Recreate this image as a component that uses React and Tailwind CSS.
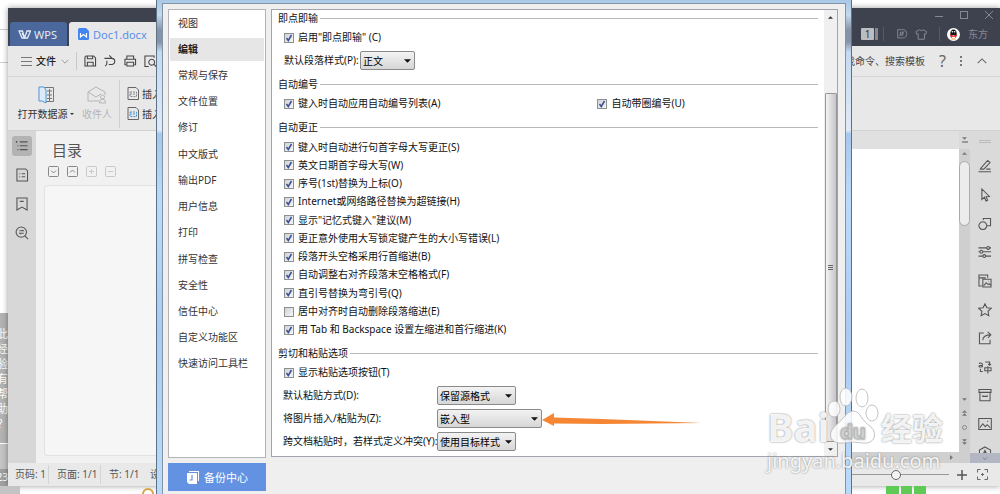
import React from 'react';
import clsx from 'clsx';

const NAV_ITEMS = [
  '视图', '编辑', '常规与保存', '文件位置', '修订', '中文版式', '输出PDF',
  '用户信息', '打印', '拼写检查', '安全性', '信任中心', '自定义功能区', '快速访问工具栏',
];

const AUTO_CORRECT = [
  { label: '键入时自动进行句首字母大写更正(S)', checked: true },
  { label: '英文日期首字母大写(W)', checked: true },
  { label: '序号(1st)替换为上标(O)', checked: true },
  { label: 'Internet或网络路径替换为超链接(H)', checked: true },
  { label: '显示"记忆式键入"建议(M)', checked: true },
  { label: '更正意外使用大写锁定键产生的大小写错误(L)', checked: true },
  { label: '段落开头空格采用行首缩进(B)', checked: true },
  { label: '自动调整右对齐段落末空格格式(F)', checked: true },
  { label: '直引号替换为弯引号(Q)', checked: true },
  { label: '居中对齐时自动删除段落缩进(E)', checked: false },
  { label: '用 Tab 和 Backspace 设置左缩进和首行缩进(K)', checked: true },
];

const ICONS = {
  save: <path d="M2 3.500Q2 2 3.500 2H11L13 4V12.500H2ZM4.500 2v3h5.500V2M4.500 12.500V8.500h6v4" />,
  redo: <path d="M1.500 4.500H9a3.200 3.200 0 0 1 0 6.400H6M6.500 1.500l3 3M4 7v2.500a3 3 0 0 1-2 3" />,
  print: <path d="M4 5V2h7v3M3 11H2V5.500h11V11h-1M4 8.500h7v4H4Z" />,
  preview: <path d="M11.500 4V2H2v11h4M9 5.500a3 3 0 1 0 .01 0M11.200 10.500l2.300 2.500" />,
  list: <path d="M1.500 3h1M5 3h8M2.500 7h1M5 7h8M2.500 11h1M5 11h8M1.500 2v2" />,
  page: <path d="M2 1h9l2 2v10.500H2ZM4.500 6h1M7 6h3.500M4.500 9h1M7 9h3.500" />,
  bookmark: <path d="M2 1h10.500V13.500L7.200 10.500 2 13.500ZM5 4.500h4" />,
  find: <path d="M6.500 1a5.300 5.300 0 1 0 .01 0M10.500 10.500l3 3M4.500 5h4l-1-1M9 7.500H5l1 1" />,
  pen: <path d="M3 9.500 10 1.500l2.500 2.200L6 10.500H2.500ZM.5 13.200h13M8.500 10.500H13" />,
  cursor: <path d="M4 1v11l2.600-2.500L8.300 13.500l1.700-.8-1.700-3.700 3.500-.2Z" />,
  shapes: <path d="M5 5a4 4 0 1 0 .01 0M5.500 3V1.500H13v7.500H9.500" />,
  sliders: <path d="M.5 3h8.500M12 3h1.500M10.500 1.500a1.500 1.500 0 1 0 .01 0M.5 7h1.500M5 7h8.500M3.500 5.500a1.500 1.500 0 1 0 .01 0M.5 11.500h4.500M8 11.500h5.500M6.500 10a1.500 1.500 0 1 0 .01 0" />,
  gallery: <path d="M4 12.500H1v-11.500H10V4M1 4H8M5 5.500h8.500v8H5ZM6 12l2.500-3 2 2 1-1 1.500 1.500M10.500 7.500h.5" />,
  star: <path d="m7.200.8 1.900 4.200 4.600.5-3.400 3.100.9 4.600-4-2.300-4 2.300.9-4.600L.7 5.500l4.600-.5Z" />,
  share: <path d="M6 2H1.500V13.200h11V9M5 9.500C5 6 8 4 13 4M10 1 13.300 4 10.300 7" />,
  translate: <path d="M1 3.500q3.500-1 3.500 1v3M4.500 5.500Q1 5.500 1 6.700t3.500 0M7.500 2H12v3M10.500 4 12 5.500 13.500 4M7 8h6.500v3.200H7ZM10.200 6.500v7.500M2.500 9v3H5" />,
  box: <path d="M1 1.500h12.500v3H1ZM2 4.500v8.700h10.500V4.500M5 7.500v1.200h4.500v-1.200" />,
  image: <path d="M.8 1.500h13v11.500h-13ZM2 11l3-4 2.500 3L9.500 8l3 3M9.500 4.500h1" />,
  badge: <path d="m7.200 1 5.800 3.200v6L7.200 13.500 1.500 10.200v-6ZM4.500 10 7.200 4.500l2.700 5.500M7.200 6.500v2.500" />,
  emblem: <path d="M2 2h6q5 0 5 5t-5 5H2ZM5.500 5h3v3.500H5ZM4 10l6-6" />,
  shirt: <path d="M5 2 1 4l1 3 1.500-.5V12.500h7V6.500L12 7l1-3-4-2Q7 4 5 2Z" />,
};

const TOOLS = ['pen', 'cursor', 'shapes', 'sliders', 'gallery', 'star', 'share', 'translate', 'box', 'image', 'badge'];

const Icon = ({ name, className = 'size-[14px]' }) => (
  <svg viewBox="0 0 14.500 14.500" fill="none" stroke="currentColor" strokeWidth="1.100" className={clsx('shrink-0', className)}>
    {ICONS[name]}
  </svg>
);

const Chevron = ({ up, className }) => (
  <svg viewBox="0 0 12 7" fill="none" stroke="currentColor" strokeWidth="1.200" className={className}>
    <path d={up ? 'M1 6l5-5 5 5' : 'M1 1l5 5 5-5'} />
  </svg>
);

const Triangle = ({ up, className }) => (
  <svg viewBox="0 0 8 4" fill="currentColor" className={className}>
    <path d={up ? 'M0 4 4 0l4 4Z' : 'M0 0h8L4 4Z'} />
  </svg>
);

const CheckBox = ({ label, checked }) => (
  <label className="flex items-center gap-[4px] whitespace-nowrap">
    <span className="grid size-[10px] shrink-0">
      <input
        type="checkbox"
        defaultChecked={checked}
        className="peer [grid-area:1/1] size-[10px] appearance-none border border-[#8e8f8f] bg-linear-to-br from-[#cfd3da] to-[#f6f6f6]"
      />
      <svg viewBox="0 0 10 10" fill="none" stroke="#3c4f94" strokeWidth="1.500" className="pointer-events-none invisible [grid-area:1/1] size-[10px] peer-checked:visible">
        <path d="M2.500 5l1.800 2.500L7.500 2" />
      </svg>
    </span>
    {label}
  </label>
);

const DropDown = ({ id, value, className }) => (
  <span className={clsx('grid h-[19px] shrink-0', className)}>
    <select
      id={id}
      defaultValue={value}
      className="[grid-area:1/1] appearance-none rounded-[2px] border border-[#8a8a8a] bg-linear-to-b from-[#f3f3f3] to-[#d6d6d6] pl-[2px] text-[10px] leading-[16px] text-black"
    >
      <option>{value}</option>
    </select>
    <Triangle className="pointer-events-none [grid-area:1/1] mr-[4px] h-[4px] w-[7px] self-center justify-self-end" />
  </span>
);

const GroupTitle = ({ children }) => (
  <h3 className="flex h-[16px] items-center gap-[2px] whitespace-nowrap">
    {children}
    <span className="h-px flex-1 bg-[#b8b8b8]" />
  </h3>
);

const PasteRow = ({ id, label, value, className, children }) => (
  <div className="flex h-[23px] items-center">
    <label htmlFor={id} className="w-[154px] shrink-0 whitespace-nowrap">{label}</label>
    <DropDown id={id} value={value} className={className} />
    {children}
  </div>
);

const TitleBar = () => (
  <header className="flex h-[38px] justify-between bg-[#3e424f] pl-[2px]">
    <div className="flex items-end gap-[2px] text-[11px]">
      <button className="flex h-[24px] w-[57px] items-center gap-[3px] rounded-t-[3px] bg-[#4a689c] pl-[8px] text-[#e4eaf5]">
        <svg viewBox="0 0 13 9" fill="none" stroke="currentColor" strokeWidth="1.300" className="h-[9px] w-[13px]">
          <path d="M.5 1h4l2 7L9 1h3.500L9.500 8h-3L4 3M1 1l3 7h2.500" />
        </svg>
        WPS
      </button>
      <button className="flex h-[24px] w-[120px] items-center gap-[4px] rounded-t-[3px] bg-[#e8e8e8] pl-[9px] text-[#5b8fe8]">
        <svg viewBox="0 0 11 12" className="h-[12px] w-[11px]">
          <path d="M0 1.500Q0 0 1.500 0H8l3 3v7.500q0 1.500-1.500 1.500h-8Q0 12 0 10.500Z" fill="#4284f0" />
          <path d="M2.500 5v4l3-2.500 3 2.500V5" fill="none" stroke="#fff" strokeWidth="1.200" />
        </svg>
        Doc1.docx
      </button>
    </div>
    <div className="flex flex-col items-end text-[#858994]">
      <div className="flex h-[14px] items-center gap-[17px] pr-[7px]">
        <svg viewBox="0 0 8 8" stroke="currentColor" className="size-[8px]"><path d="M0 5.500h8" /></svg>
        <svg viewBox="0 0 8 8" fill="none" stroke="currentColor" className="size-[8px]"><rect x=".5" y=".5" width="7" height="7" /></svg>
        <svg viewBox="0 0 8 8" stroke="currentColor" className="size-[8px]"><path d="M0 0l8 8M8 0 0 8" /></svg>
      </div>
      <div className="flex h-[24px] items-center pr-[12px] text-[10px]">
        <span className="h-[12px] w-[13px] rounded-[1px] bg-[#bdbdc1] text-center leading-[12px] text-[#333]">1</span>
        <span className="ml-[1px] h-[12px] w-[3px] bg-[#85878f]" />
        <span className="mx-[5px] h-[14px] w-px bg-[#555966]" />
        <Icon name="emblem" className="ml-[7px] size-[12px]" />
        <Icon name="shirt" className="ml-[7px] size-[13px]" />
        <span className="mr-[7px] ml-[11px] h-[14px] w-px bg-[#555966]" />
        <svg viewBox="0 0 13 13" className="mr-[8px] size-[13px]">
          <circle cx="6.500" cy="6.500" r="6.500" fill="#fff" />
          <ellipse cx="6.500" cy="6" rx="3.200" ry="4.500" fill="#151515" />
          <ellipse cx="6.500" cy="9" rx="2" ry="2" fill="#fff" />
          <path d="M3 6.500q3.500 2 7 0v1.500q-3.500 2-7 0Z" fill="#e33" />
          <path d="M4 11.500h5l-1-1H5Z" fill="#f5a623" />
          <circle cx="5.400" cy="3.800" r=".8" fill="#fff" />
          <circle cx="7.600" cy="3.800" r=".8" fill="#fff" />
        </svg>
        东方
      </div>
    </div>
  </header>
);

const MenuBar = () => (
  <div className="flex h-[31px] items-center justify-between border-b border-[#d5d5d5] text-[#444]">
    <div className="flex items-center pl-[13px]">
      <svg viewBox="0 0 11 9" stroke="#777" className="h-[9px] w-[11px]"><path d="M0 .5h11M0 4.500h11M0 8.500h11" /></svg>
      <button className="ml-[4px] flex items-center gap-[5px] font-medium text-[#222]">
        文件
        <Chevron className="h-[5px] w-[8px] text-[#888]" />
      </button>
      <span className="mr-[6px] ml-[7px] h-[18px] w-px bg-[#c8c8c8]" />
      <div className="flex gap-[6px]">
        <Icon name="save" />
        <Icon name="redo" />
        <Icon name="print" />
        <Icon name="preview" />
      </div>
    </div>
    <div className="flex items-center pr-[12px]">
      <span>查找命令、搜索模板</span>
      <span className="ml-[14px] text-[16px] text-[#666]">?</span>
      <span className="ml-[14px] flex flex-col gap-[2px]">
        <i className="size-[2px] bg-[#777]" />
        <i className="size-[2px] bg-[#777]" />
        <i className="size-[2px] bg-[#777]" />
      </span>
      <Chevron up className="ml-[14px] h-[6px] w-[12px] text-[#666]" />
    </div>
  </div>
);

const Ribbon = () => (
  <div className="flex h-[54px] items-center border-b border-[#d2d2d2] pl-[9px] text-[#333]">
    <button className="flex w-[57px] flex-col items-center gap-[2px] whitespace-nowrap">
      <svg viewBox="0 0 16 18" fill="none" className="h-[18px] w-[16px]">
        <path d="M7 1.500h8.500v14H7M9 5h5M9 9h5M9 12.500h5M11.500 3v12" stroke="#777" />
        <path d="M1 1h5l2 3v13l-4-2H1Z" fill="#dcebfa" stroke="#4e95d6" />
      </svg>
      <span className="flex items-center gap-[2px] leading-[16px]">
        打开数据源
        <Triangle className="h-[2px] w-[4px]" />
      </span>
    </button>
    <button disabled className="ml-[7px] flex w-[32px] flex-col items-center gap-[2px] whitespace-nowrap text-[#b5b5b5]">
      <svg viewBox="0 0 20 18" fill="none" stroke="currentColor" className="h-[18px] w-[20px]">
        <path d="M12 15H1V6l8-5 9 5v3M1 6l8 5 5-3M15.500 9a2 2 0 1 0 .01 0M12.500 17q0-4 3-4t3 4Z" />
      </svg>
      <span className="leading-[16px]">收件人</span>
    </button>
    <span className="ml-[6px] h-[48px] w-px bg-[#cfcfcf]" />
    <div className="ml-[7px] flex flex-col gap-[4px] whitespace-nowrap">
      {[false, true].map((blue) => (
        <button key={String(blue)} className="flex items-center gap-[3px] leading-[16px]">
          <svg viewBox="0 0 12 13" fill="none" className="h-[13px] w-[12px]">
            <path d="M1 .5h8l2.500 2.500v9.500H1Z" stroke="#666" />
            <path d="M3 5h6.500v4.500H3ZM3 7h6.500" stroke={blue ? '#4e95d6' : '#888'} strokeDasharray="2 1" />
          </svg>
          插入
        </button>
      ))}
    </div>
  </div>
);

const SideBar = () => (
  <nav className="flex w-[28px] flex-col items-center gap-[9px] bg-[#d7d7d7] pt-[5px] text-[#555]">
    {['list', 'page', 'bookmark', 'find'].map((name, i) => (
      <button key={name} className={clsx('flex size-[20px] items-center justify-center rounded-[3px]', i === 0 && 'bg-[#b3b3b3]')}>
        <Icon name={name} />
      </button>
    ))}
  </nav>
);

const TocPane = () => (
  <section className="flex w-[121px] flex-col bg-[#f1f1f1] pb-[7px] pl-[8px]">
    <h2 className="mt-[9px] pl-[8px] text-[15px] leading-[21px] text-[#555]">目录</h2>
    <div className="mt-[5px] flex gap-[8px] pl-[4px] text-[#888]">
      {['M3 4.500l2.500 2.500L8 4.500', 'M3 6.500 5.500 4 8 6.500', 'M3 5.500h5M5.500 3v5', 'M3 5.500h5'].map((d, i) => (
        <svg key={d} viewBox="0 0 11 11" fill="none" stroke="currentColor" className={clsx('size-[11px]', i > 1 && 'text-[#c9c9c9]')}>
          <rect x=".5" y=".5" width="10" height="10" rx="1" />
          <path d={d} />
        </svg>
      ))}
    </div>
    <div className="mt-[8px] flex-1 rounded-l-[4px] border border-r-0 border-[#e2e2e2] bg-[#f6f6f6]" />
  </section>
);

const VerticalBar = () => (
  <div className="flex w-[11px] flex-col items-center bg-[#cfcfcf] text-[#777]">
    <div className="flex h-[18px] w-full flex-col items-center justify-center gap-[1px] bg-[#dadada]">
      <Triangle className="h-[3px] w-[5px]" />
      <span className="h-[2px] w-[6px] bg-[#999]" />
    </div>
    <Triangle up className="mt-[3px] h-[3px] w-[5px]" />
    <div className="mt-[6px] h-[65px] w-[11px] rounded-full border border-[#aaa] bg-[#ececec]" />
    <div className="mt-auto mb-[18px] flex flex-col items-center gap-[9px]">
      <Triangle className="h-[3px] w-[5px]" />
      <span className="flex flex-col"><Triangle up className="h-[3px] w-[5px]" /><Triangle up className="h-[3px] w-[5px]" /></span>
      <span className="size-[5px] rounded-full border border-[#888]" />
      <span className="flex flex-col"><Triangle className="h-[3px] w-[5px]" /><Triangle className="h-[3px] w-[5px]" /></span>
    </div>
  </div>
);

const ToolStrip = () => (
  <aside className="flex w-[30px] flex-col bg-[#dadada] text-[#555]">
    <div className="mx-auto mt-[9px] mb-[9px] h-[3px] w-[12px] shrink-0 border-y border-[#bbb]" />
    <div className="min-h-0 flex-1 overflow-hidden">
      <div className="flex h-[315px] flex-col">
        {TOOLS.map((name) => (
          <button key={name} className="flex flex-1 items-center justify-center">
            <Icon name={name} />
          </button>
        ))}
      </div>
    </div>
    <div className="flex h-[10px] shrink-0 items-center justify-center bg-[#b3b7c4]">
      <Chevron className="h-[3px] w-[6px]" />
    </div>
  </aside>
);

const StatusBar = () => (
  <footer className="flex h-[23px] items-center justify-between bg-[#e9e9e9] text-[#555]">
    <div className="flex items-center whitespace-nowrap">
      <span className="w-[41px] border-r border-[#d4d4d4] pl-[7px] leading-[19px]">页码: 1</span>
      <span className="w-[52px] border-r border-[#d4d4d4] pl-[8px] leading-[19px]">页面: 1/1</span>
      <span className="w-[49px] pl-[8px] leading-[19px]">节: 1/1</span>
      <span>设</span>
    </div>
    <div className="flex items-center pr-[12px]">
      <input
        type="range"
        aria-label="缩放"
        defaultValue={50}
        className="h-[12px] w-[106px] appearance-none bg-[linear-gradient(#999,#999)] bg-[length:100%_1px] bg-center bg-no-repeat [&::-webkit-slider-thumb]:size-[10px] [&::-webkit-slider-thumb]:appearance-none [&::-webkit-slider-thumb]:rounded-full [&::-webkit-slider-thumb]:border [&::-webkit-slider-thumb]:border-[#666] [&::-webkit-slider-thumb]:bg-[#f2f2f2]"
      />
      <svg viewBox="0 0 10 10" stroke="#555" strokeWidth="1.500" className="ml-[8px] size-[10px]"><path d="M0 5h10M5 0v10" /></svg>
      <svg viewBox="0 0 11 11" fill="none" stroke="#666" className="ml-[10px] size-[11px]">
        <path d="M.5 3.500v-3h3M7.500.5h3v3M10.500 7.500v3h-3M3.500 10.500h-3v-3M5.500 4v3M4 5.500h3" />
      </svg>
    </div>
  </footer>
);

const OptionsDialog = () => (
  <div
    role="dialog"
    aria-label="选项"
    className="absolute inset-y-0 right-[148px] left-[156px] border-x border-[#5c7186] bg-[linear-gradient(#a9c7e6_0px,#c3d9ee_15px,#8593a8_30px,#8593a8_42px,#c4daf1_52px,#dfeaf7_130px,#a5c8ec_134px,#b9dbfb_200px,#a9cbf2_330px,#b9dbfb_494px)] px-[5px] pt-[3px]"
  >
    <div className="flex h-full gap-[5px] border-x border-t border-[#8394a6] bg-[#efefef] pt-[5px] pr-[7px] pb-[3px] pl-[5px]">
      <div className="flex w-[98px] shrink-0 flex-col gap-[5px]">
        <nav className="flex-1 border border-[#b4b4b4] bg-white px-[1px]">
          <div className="flex h-[367px] flex-col">
            {NAV_ITEMS.map((item) => (
              <button key={item} className="flex flex-1 items-center text-left text-[#333]">
                <span className={clsx('w-full py-[4px] pl-[8px] leading-[15px]', item === '编辑' && 'bg-[#e6e6e6] font-bold text-[#222]')}>{item}</span>
              </button>
            ))}
          </div>
        </nav>
        <button className="flex h-[28px] items-center justify-center gap-[5px] bg-[#6492e2] text-[11px] text-white">
          <svg viewBox="0 0 13 13" className="size-[13px]">
            <path d="M3 0h10v10h-1V1H3Z" fill="#fff" />
            <path d="M1 2h10v11H3l-2-2Z" fill="#fff" />
            <path d="M6 4v5H3.500" fill="none" stroke="#6492e2" strokeWidth="1.200" />
          </svg>
          备份中心
        </button>
      </div>
      <div className="mb-[34px] flex min-w-0 flex-1 border border-[#a3a3ad] bg-white">
        <form className="flex min-w-0 flex-1 flex-col px-[6px] text-[#111]">
          <GroupTitle>即点即输</GroupTitle>
          <div className="pl-[6px]">
            <div className="flex h-[23px] items-center"><CheckBox label={'启用"即点即输" (C)'} checked /></div>
            <div className="flex h-[23px] items-center">
              <label htmlFor="para-style" className="w-[76px] whitespace-nowrap">默认段落样式(P):</label>
              <DropDown id="para-style" value="正文" className="w-[55px]" />
            </div>
          </div>
          <div className="mt-[4px]">
            <GroupTitle>自动编号</GroupTitle>
            <div className="grid h-[23px] grid-cols-[314fr_221fr] items-center pl-[6px]">
              <CheckBox label="键入时自动应用自动编号列表(A)" checked />
              <CheckBox label="自动带圈编号(U)" checked />
            </div>
          </div>
          <div className="mt-[4px]">
            <GroupTitle>自动更正</GroupTitle>
            <div className="mt-[3px] flex h-[201px] flex-col pl-[6px]">
              {AUTO_CORRECT.map((opt) => (
                <div key={opt.label} className="flex flex-1 items-center"><CheckBox {...opt} /></div>
              ))}
            </div>
          </div>
          <div className="mt-[6px]">
            <GroupTitle>剪切和粘贴选项</GroupTitle>
            <div className="flex h-[23px] items-center pl-[6px]"><CheckBox label="显示粘贴选项按钮(T)" checked /></div>
            <div className="pl-[5px]">
              <PasteRow id="paste-mode" label="默认粘贴方式(D):" value="保留源格式" className="w-[79px]" />
              <PasteRow id="image-mode" label="将图片插入/粘贴为(Z):" value="嵌入型" className="w-[105px]">
                <svg viewBox="0 0 160 14" className="h-[14px] w-[160px]">
                  <path d="M0 8 12 1v4.500L60 7l100 4-100 1-48-.5V14Z" fill="#f58634" />
                </svg>
              </PasteRow>
              <PasteRow id="cross-mode" label="跨文档粘贴时，若样式定义冲突(Y):" value="使用目标样式" className="w-[79px]" />
            </div>
          </div>
        </form>
        <div className="flex w-[13px] shrink-0 flex-col items-center bg-[#f0f0f0] text-[#333]">
          <Triangle up className="mt-[6px] h-[3px] w-[5px]" />
          <div className="mt-[74px] flex w-[12px] flex-1 flex-col items-center justify-center gap-[1px] rounded-[1px] border border-[#979797] bg-linear-to-r from-[#f4f4f4] to-[#c5c5ca]">
            <i className="h-px w-[5px] bg-[#666]" />
            <i className="h-px w-[5px] bg-[#666]" />
            <i className="h-px w-[5px] bg-[#666]" />
          </div>
          <div className="flex h-[14px] items-center"><Triangle className="h-[3px] w-[5px]" /></div>
        </div>
      </div>
    </div>
  </div>
);

const Watermark = () => (
  <div className="pointer-events-none absolute right-[55px] bottom-[20px] w-[178px] text-white/90 [text-shadow:0_0_2px_#777]">
    <div className="flex items-end font-bold">
      <span className="w-[60px] text-[40px] leading-[34px]">Bai</span>
      <svg viewBox="0 0 52 58" className="h-[58px] w-[52px]" fill="#fff" fillOpacity=".85" stroke="#b5b5b5" strokeOpacity=".8">
        <ellipse cx="7" cy="23" rx="6" ry="8" />
        <ellipse cx="19" cy="11" rx="6" ry="9" />
        <ellipse cx="35" cy="12" rx="6" ry="9" />
        <ellipse cx="45" cy="27" rx="6" ry="8" />
        <path d="M26 25q5 0 9 7 3 5 9 9 5 5 3 11-3 6-11 5-10-2-20 0-9 1-12-5-2-6 4-12 5-4 9-9 4-6 9-6Z" />
        <text x="26" y="53" textAnchor="middle" fontSize="20" fontWeight="700" stroke="#bbb">du</text>
      </svg>
      <span className="pl-[2px] text-[31px] leading-[31px]">经验</span>
    </div>
    <div className="pt-[4px] text-[20px] leading-[26px]">jingyan.baidu.com</div>
  </div>
);

export default function App() {
  return (
    <div className="relative flex h-screen flex-col overflow-hidden bg-white font-['Noto_Sans','Noto_Sans_CJK_SC',sans-serif] text-[10px] leading-[15px]">
      <div className="flex min-h-0 flex-1 pt-[8px]">
        <div className="flex w-[8px] shrink-0 flex-col overflow-hidden">
          <div className="mt-[21px] h-[34px] shrink-0 border-y border-[#ccc]" />
          <div className="mt-auto flex h-[130px] shrink-0 flex-col items-end justify-center bg-[#b3b3b3] text-[11px] leading-[15px] text-white">
            {[...'此经验有帮助？'].map((ch) => <span key={ch}>{ch}</span>)}
          </div>
          <div className="h-[26px] shrink-0 border-t border-white bg-[#c4c4c4]" />
          <div className="flex h-[17px] shrink-0 items-center justify-end bg-[#a0a0a0] text-white">23</div>
        </div>
        <main className="flex min-w-0 flex-1 flex-col bg-[#e8e8e8] shadow-[0_0_6px_#0006]">
          <TitleBar />
          <MenuBar />
          <Ribbon />
          <div className="flex min-h-0 flex-1">
            <SideBar />
            <TocPane />
            <div className="flex min-w-0 flex-1 flex-col">
              <div className="h-[18px] bg-[#e0e0e0]" />
              <div className="flex-1 bg-white" />
              <div className="flex h-[11px] items-center justify-end bg-[#d0d0d0] pr-[6px] text-[#777]">
                <svg viewBox="0 0 3 5" fill="currentColor" className="h-[5px] w-[3px]"><path d="M0 0v5l3-2.500Z" /></svg>
              </div>
            </div>
            <VerticalBar />
            <ToolStrip />
          </div>
          <StatusBar />
        </main>
      </div>
      <div className="flex h-[8px] shrink-0 items-end justify-between">
        <div className="flex h-full items-end">
          <span className="h-full w-[20px] bg-[#c4c4c4]" />
          <svg viewBox="0 0 12 6" fill="none" stroke="#d6a545" strokeWidth="2" className="ml-[122px] h-[6px] w-[12px]"><path d="M1 6a5 5 0 0 1 10 0" /></svg>
        </div>
        <div className="mr-[74px] flex h-full gap-[2px]">
          <span className="w-[13px] bg-[#5fca55]" />
          <span className="w-[11px] bg-[#5fca55]" />
          <span className="w-[12px] bg-[#5fca55]" />
        </div>
      </div>
      <OptionsDialog />
      <Watermark />
    </div>
  );
}
